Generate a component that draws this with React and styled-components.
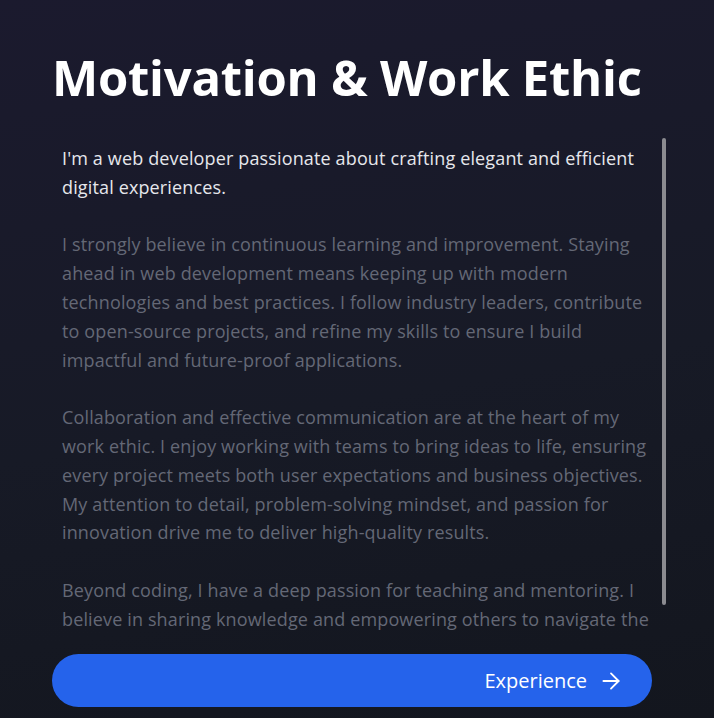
import React from "react";
import styled, { createGlobalStyle } from "styled-components";
import { ArrowRight } from "lucide-react";

const Global = createGlobalStyle`
  html, body {
    margin: 0;
    padding: 0;
    height: 100%;
  }
  body {
    font-family: "Open Sans", "Noto Sans", sans-serif;
    background: #15171f;
  }
`;

export const Page = styled.main`
  box-sizing: border-box;
  width: 714px;
  height: 718px;
  overflow: hidden;
  padding: 44px 0 0 52px;
  display: flex;
  flex-direction: column;
  background: linear-gradient(170deg, #1b1a2e 0%, #171a26 55%, #13161e 100%);
`;

export const Title = styled.h1`
  margin: 0 0 28px;
  font-size: 49px;
  line-height: 66px;
  font-weight: 700;
  color: #ffffff;
  letter-spacing: -0.25px;
  white-space: nowrap;
`;

export const ScrollFrame = styled.div`
  position: relative;
  width: 614px;
  height: 498px;
  flex-shrink: 0;
`;

export const Scroller = styled.div`
  box-sizing: border-box;
  width: 100%;
  height: 100%;
  overflow-y: auto;
  padding: 6px 14px 10px 10px;
  scrollbar-width: none;

  &::-webkit-scrollbar {
    display: none;
  }
`;

export const Thumb = styled.div`
  position: absolute;
  top: 0;
  right: 0;
  width: 4px;
  height: 467px;
  border-radius: 2px;
  background: #8b8b90;
`;

export const Para = styled.p`
  margin: 0 0 28.8px;
  font-size: 18px;
  line-height: 28.8px;
  letter-spacing: 0.14px;
  color: ${(p) => (p.$lead ? "#e6e7ec" : "#646876")};

  &:last-child {
    margin-bottom: 0;
  }
`;

export const Button = styled.button`
  box-sizing: border-box;
  margin-top: 18px;
  width: 600px;
  height: 53px;
  flex-shrink: 0;
  border: none;
  border-radius: 999px;
  background: #2563eb;
  color: #ffffff;
  font-family: inherit;
  font-size: 20px;
  display: flex;
  align-items: center;
  justify-content: flex-end;
  gap: 11px;
  padding: 0 28px 0 24px;
  cursor: pointer;
`;

export default function App() {
  return (
    <>
      <Global />
      <Page>
        <Title>Motivation &amp; Work Ethic</Title>
        <ScrollFrame>
          <Scroller>
            <Para $lead>
              I'm a web developer passionate about crafting elegant and
              efficient digital experiences.
            </Para>
            <Para>
              I strongly believe in continuous learning and improvement.
              Staying ahead in web development means keeping up with modern
              technologies and best practices. I follow industry leaders,
              contribute to open-source projects, and refine my skills to
              ensure I build impactful and future-proof applications.
            </Para>
            <Para>
              Collaboration and effective communication are at the heart of my
              work ethic. I enjoy working with teams to bring ideas to life,
              ensuring every project meets both user expectations and business
              objectives. My attention to detail, problem-solving mindset, and
              passion for innovation drive me to deliver high-quality results.
            </Para>
            <Para>
              Beyond coding, I have a deep passion for teaching and mentoring.
              I believe in sharing knowledge and empowering others to navigate
              the ever-evolving world of technology.
            </Para>
          </Scroller>
          <Thumb />
        </ScrollFrame>
        <Button>
          Experience
          <ArrowRight size={26} strokeWidth={1.7} />
        </Button>
      </Page>
    </>
  );
}
